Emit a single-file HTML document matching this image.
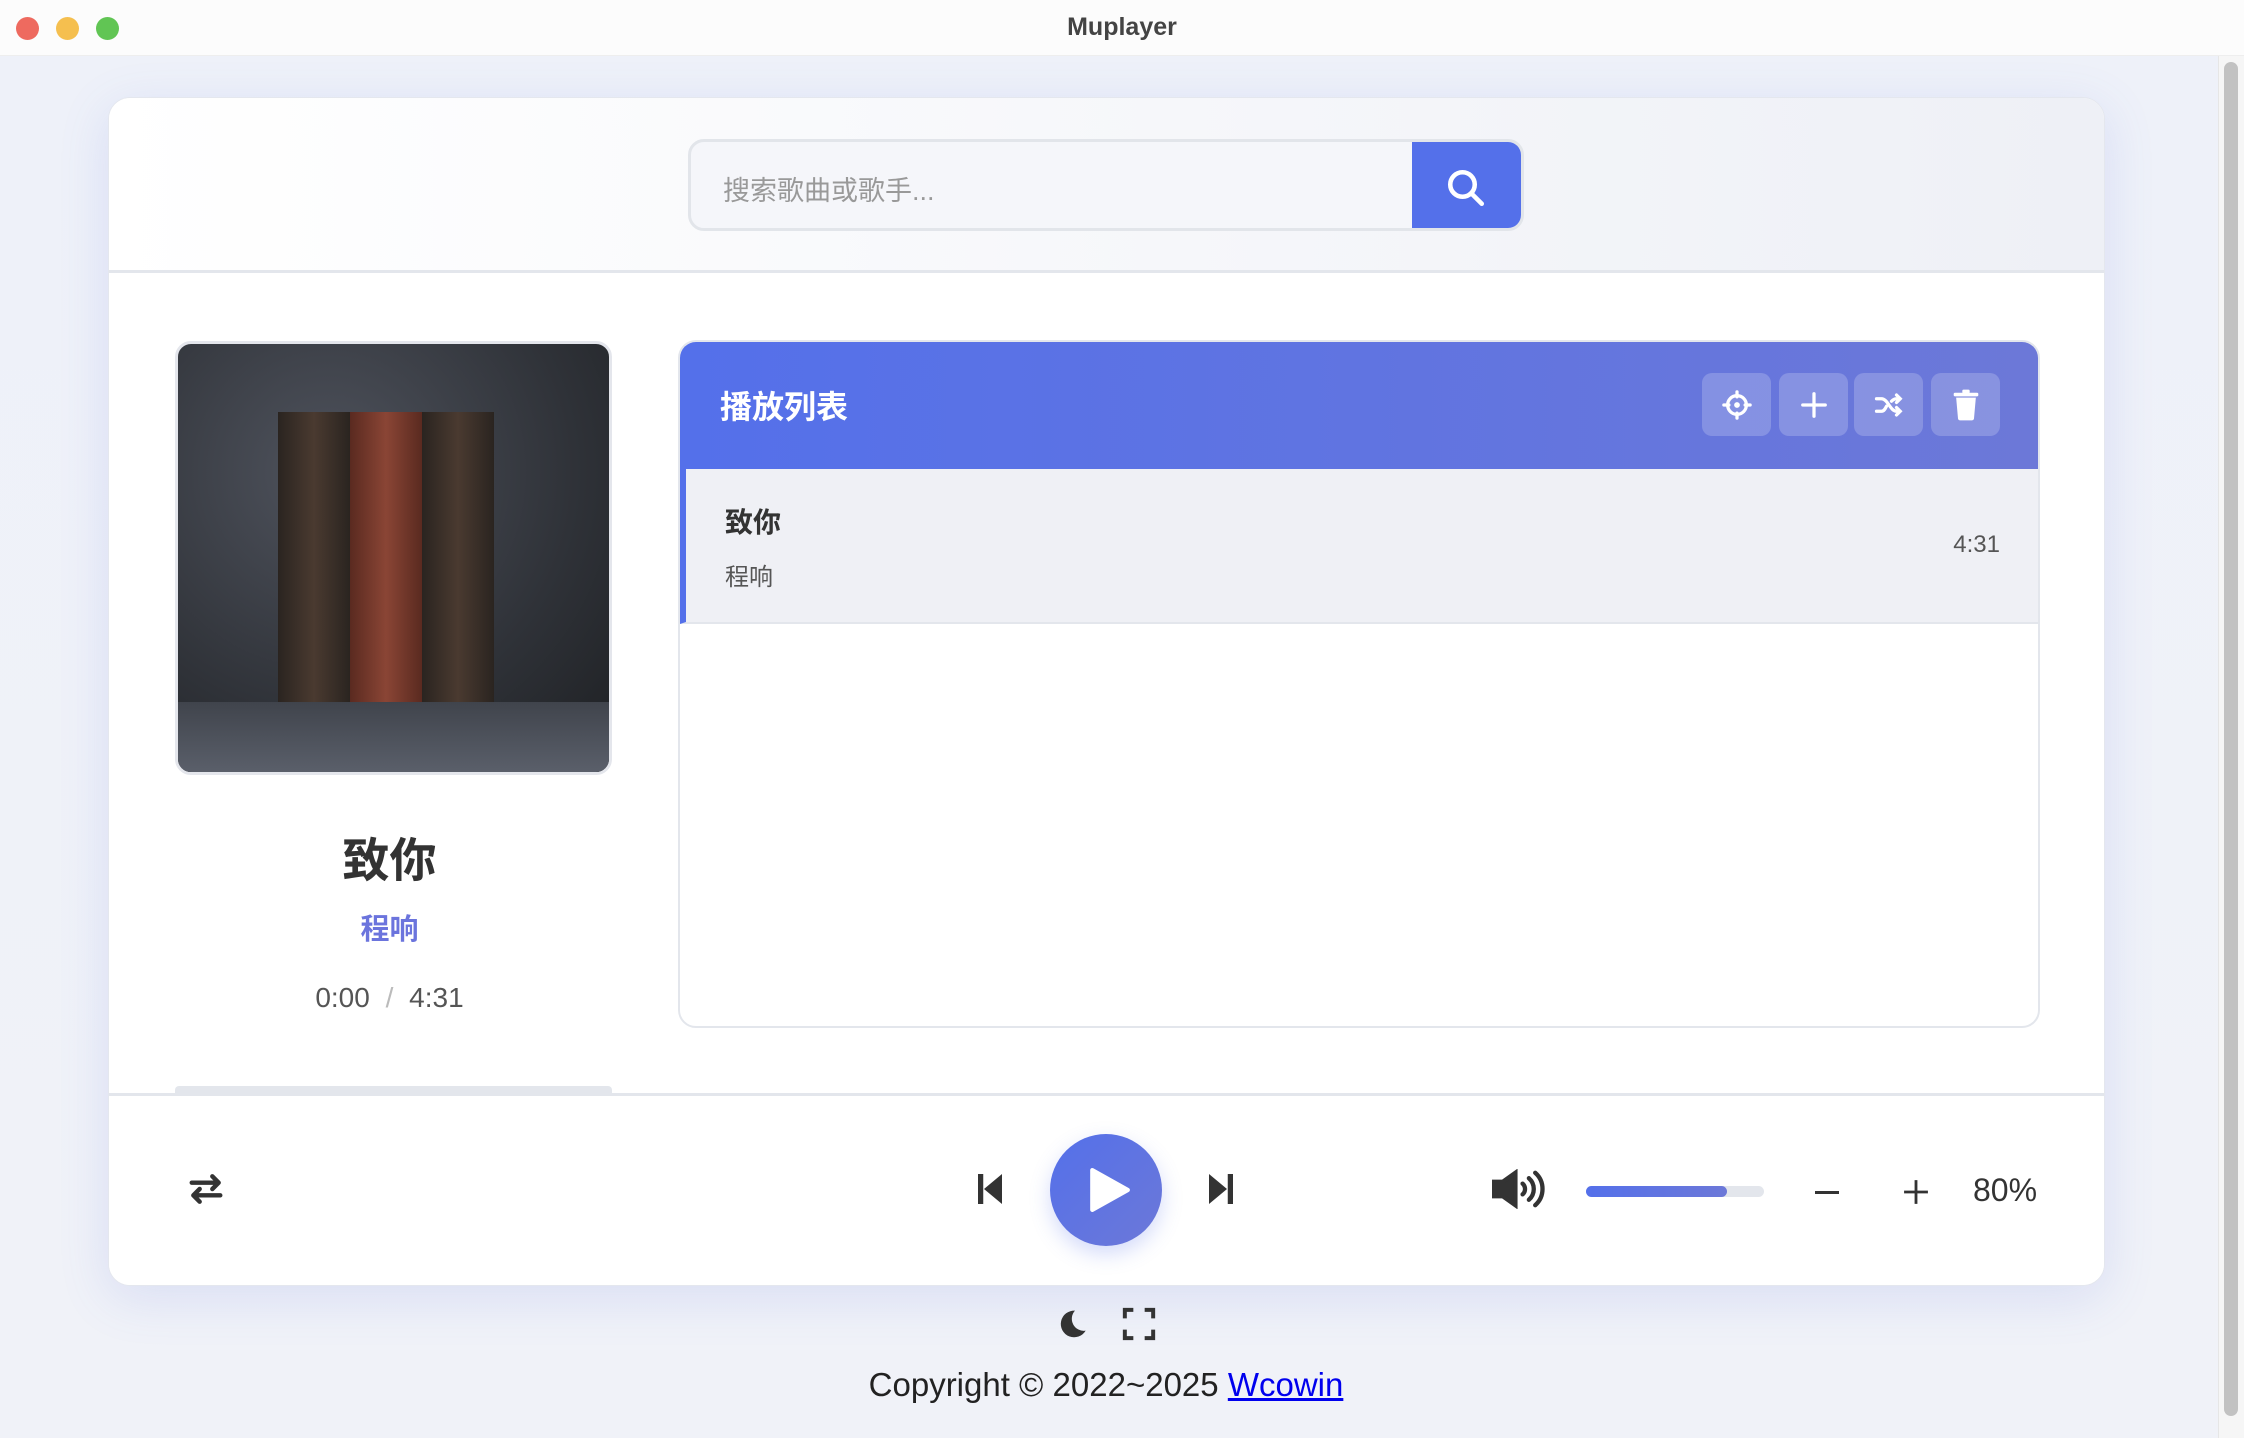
<!DOCTYPE html>
<html><head><meta charset="utf-8"><style>
*{box-sizing:border-box;margin:0;padding:0}
body{width:2244px;height:1438px;overflow:hidden;font-family:"Liberation Sans","Noto Sans CJK SC",sans-serif;background:linear-gradient(180deg,#eef1f9,#f0f2f8);position:relative;color:#333}
.tb{position:absolute;left:0;top:0;width:2244px;height:56px;background:#fcfcfc;border-bottom:1px solid #eee}
.tb .d{position:absolute;top:17px;width:23px;height:23px;border-radius:50%}
.tb .t{position:absolute;left:0;right:0;top:13px;text-align:center;font-weight:bold;font-size:25px;color:#444}
.sb{position:absolute;left:2218px;top:56px;width:26px;height:1382px;background:#f6f6f6;border-left:1px solid #e6e6e6}
.sb i{position:absolute;left:5px;top:6px;width:14px;height:1354px;border-radius:7px;background:#c2c2c2}
.card{position:absolute;left:108px;top:97px;width:1997px;height:1189px;background:#fff;border-radius:22px;box-shadow:0 12px 50px rgba(90,110,220,.15);overflow:hidden;border:1px solid #e4e7ee}
.hdr{position:absolute;left:0;top:0;width:100%;height:175px;background:linear-gradient(90deg,#fff,#eef0f6);border-bottom:3px solid #e3e6ec}
.search{position:absolute;left:579px;top:41px;width:836px;height:92px;border:3px solid #e2e5ea;border-radius:16px;background:#f5f6fa;overflow:hidden}
.search span{position:absolute;left:32px;top:27px;font-size:27px;color:#999}
.search b{position:absolute;right:0;top:0;width:109px;height:100%;background:#5470ea}
.art{position:absolute;left:66px;top:243px;width:437px;height:434px;border-radius:16px;overflow:hidden;border:3px solid #e4e6ec;background:radial-gradient(circle at 35% 30%,#4f535d,#2f3238 60%,#1d1f22)}
.art .bk{position:absolute;top:68px;height:335px}
.pl{position:absolute;left:569px;top:242px;width:1362px;height:688px;border:2px solid #e3e6ec;border-radius:18px;overflow:hidden;background:#fff}
.plh{height:127px;background:linear-gradient(90deg,#5470ea,#6c78d8);position:relative}
.plh .t{position:absolute;left:40px;top:40px;color:#fff;font-weight:bold;font-size:32px}
.btn{position:absolute;top:31px;width:69px;height:63px;border-radius:10px;background:rgba(255,255,255,.2)}
.item{position:relative;height:155px;background:#eff0f5;border-left:6px solid #5470ea;border-bottom:2px solid #e3e6ec}
.foot{position:absolute;left:0;top:995px;width:100%;height:195px;border-top:3px solid #e3e6ec;background:#fff}
</style></head><body>
<div class="tb"><div class="d" style="left:16px;background:#ee6a5f"></div><div class="d" style="left:56px;background:#f5bf4f"></div><div class="d" style="left:96px;background:#61c554"></div><div class="t">Muplayer</div></div>
<div class="sb"><i></i></div>
<div class="card">
 <div class="hdr"><div class="search"><span>搜索歌曲或歌手...</span><b><svg style="position:absolute;left:33px;top:25px" width="42" height="42" viewBox="0 0 24 24" fill="none" stroke="#fff" stroke-width="2.6" stroke-linecap="round"><circle cx="10" cy="10" r="7"/><path d="M15.5 15.5L21 21"/></svg></b></div></div>
 <div class="art">
  <div class="bk" style="left:100px;width:72px;background:linear-gradient(90deg,#2a2420,#4a3a30,#2a2420)"></div>
  <div class="bk" style="left:172px;width:72px;background:linear-gradient(90deg,#5a2a20,#8a4535,#5a2a20)"></div>
  <div class="bk" style="left:244px;width:72px;background:linear-gradient(90deg,#2a2420,#4a3a30,#2a2420)"></div>
  <div style="position:absolute;left:0;bottom:0;width:100%;height:70px;background:linear-gradient(180deg,#40444c,#5a5f6a)"></div>
 </div>
 <div style="position:absolute;left:62px;width:437px;top:724px;text-align:center;font-size:47px;font-weight:bold;color:#333">致你</div>
 <div style="position:absolute;left:62px;width:437px;top:808px;text-align:center;font-size:29px;font-weight:bold;color:#6b74dd">程响</div>
 <div style="position:absolute;left:62px;width:437px;top:884px;text-align:center;font-size:28px;color:#555">0:00 <span style="color:#bbb;margin:0 8px">/</span> 4:31</div>
 <div style="position:absolute;left:66px;top:988px;width:437px;height:8px;background:#e3e6ec;border-radius:4px 4px 0 0"></div>
 <div class="pl">
  <div class="plh"><div class="t">播放列表</div>
   <div class="btn" style="left:1022px"><svg style="position:absolute;left:20px;top:17px" width="30" height="30" viewBox="0 0 24 24" fill="none" stroke="#fff" stroke-width="2.6" stroke-linecap="round"><circle cx="12" cy="12" r="7.5"/><path d="M12 1.5v4M12 18.5v4M1.5 12h4M18.5 12h4"/><circle cx="12" cy="12" r="1" fill="#fff"/></svg></div>
   <div class="btn" style="left:1099px"><svg style="position:absolute;left:20px;top:17px" width="30" height="30" viewBox="0 0 24 24" stroke="#fff" stroke-width="2.6" stroke-linecap="round"><path d="M12 3v18M3 12h18"/></svg></div>
   <div class="btn" style="left:1174px"><svg style="position:absolute;left:20px;top:17px" width="30" height="30" viewBox="0 0 24 24" fill="none" stroke="#fff" stroke-width="2.6" stroke-linecap="round"><path d="M2 7h4c5 0 7 10 12 10h2M2 17h4c2 0 3-2 4-4M14 9c1-1 2-2 4-2h2M18 4l3 3-3 3M18 14l3 3-3 3"/></svg></div>
   <div class="btn" style="left:1251px"><svg style="position:absolute;left:20px;top:16px" width="30" height="32" viewBox="0 0 24 26" fill="#fff"><rect x="2" y="3" width="20" height="3" rx="1"/><rect x="9" y="0.5" width="6" height="3" rx="1"/><path d="M4 7h16l-1.5 17c0 1-1 1.5-2 1.5h-9c-1 0-2-.5-2-1.5z"/></svg></div>
  </div>
  <div class="item">
   <div style="position:absolute;left:39px;top:32px;font-size:28px;font-weight:bold;color:#333">致你</div>
   <div style="position:absolute;left:39px;top:88px;font-size:24px;color:#555">程响</div>
   <div style="position:absolute;right:38px;top:62px;font-size:24px;color:#555">4:31</div>
  </div>
 </div>
 <div class="foot">
  <svg style="position:absolute;left:78px;top:74px" width="38" height="38" viewBox="0 0 24 24" fill="none" stroke="#333" stroke-width="2.8" stroke-linecap="round" stroke-linejoin="round"><path d="M3 8h17M16 4l4 4-4 4M21 16H4M8 12l-4 4 4 4"/></svg>
  <svg style="position:absolute;left:866px;top:75px" width="30" height="36" viewBox="0 0 20 24" fill="#333"><rect x="2" y="2" width="3.5" height="20"/><path d="M18 2v20L6 12z"/></svg>
  <div style="position:absolute;left:941px;top:38px;width:112px;height:112px;border-radius:50%;background:linear-gradient(135deg,#5470ea,#6c78d8);box-shadow:0 8px 20px rgba(84,112,234,.25)"><svg style="position:absolute;left:38px;top:33px" width="42" height="46" viewBox="0 0 20 22" fill="#fff"><path d="M2 1.5L19 11 2 20.5z" stroke="#fff" stroke-width="2" stroke-linejoin="round"/></svg></div>
  <svg style="position:absolute;left:1097px;top:75px" width="30" height="36" viewBox="0 0 20 24" fill="#333"><rect x="14.5" y="2" width="3.5" height="20"/><path d="M2 2v20l12-10z"/></svg>
  <svg style="position:absolute;left:1383px;top:73px" width="54" height="40" viewBox="0 0 30 22" fill="none" stroke="#333" stroke-width="2.4" stroke-linecap="round"><path d="M1 7h5l7-5v18l-7-5H1z" fill="#333"/><path d="M17 8a4 4 0 0 1 0 6M20.5 5a8 8 0 0 1 0 12M24 2a12 12 0 0 1 0 18"/></svg>
  <div style="position:absolute;left:1477px;top:90px;width:178px;height:11px;border-radius:6px;background:#e3e6ec"><div style="width:141px;height:100%;border-radius:6px;background:linear-gradient(90deg,#5470ea,#6c78d8)"></div></div>
  <div style="position:absolute;left:1706px;top:95px;width:24px;height:3px;background:#333"></div>
  <svg style="position:absolute;left:1794px;top:83px" width="26" height="26" viewBox="0 0 24 24" stroke="#333" stroke-width="2.6"><path d="M12 1v22M1 12h22"/></svg>
  <div style="position:absolute;left:1864px;top:76px;font-size:32px;color:#333">80%</div>
 </div>
</div>
<svg style="position:absolute;left:1055px;top:1307px" width="32" height="34" viewBox="0 0 24 24" fill="#333"><path d="M15 2a10 10 0 1 0 8 15A9 9 0 0 1 15 2z"/></svg>
<svg style="position:absolute;left:1122px;top:1307px" width="34" height="34" viewBox="0 0 24 24" fill="none" stroke="#333" stroke-width="2.8"><path d="M2 8V2h6M16 2h6v6M22 16v6h-6M8 22H2v-6"/></svg>
<div style="position:absolute;left:0;width:2212px;top:1366px;text-align:center;font-size:33px;color:#222">Copyright © 2022~2025 <span style="color:#00e;text-decoration:underline">Wcowin</span></div>
</body></html>
